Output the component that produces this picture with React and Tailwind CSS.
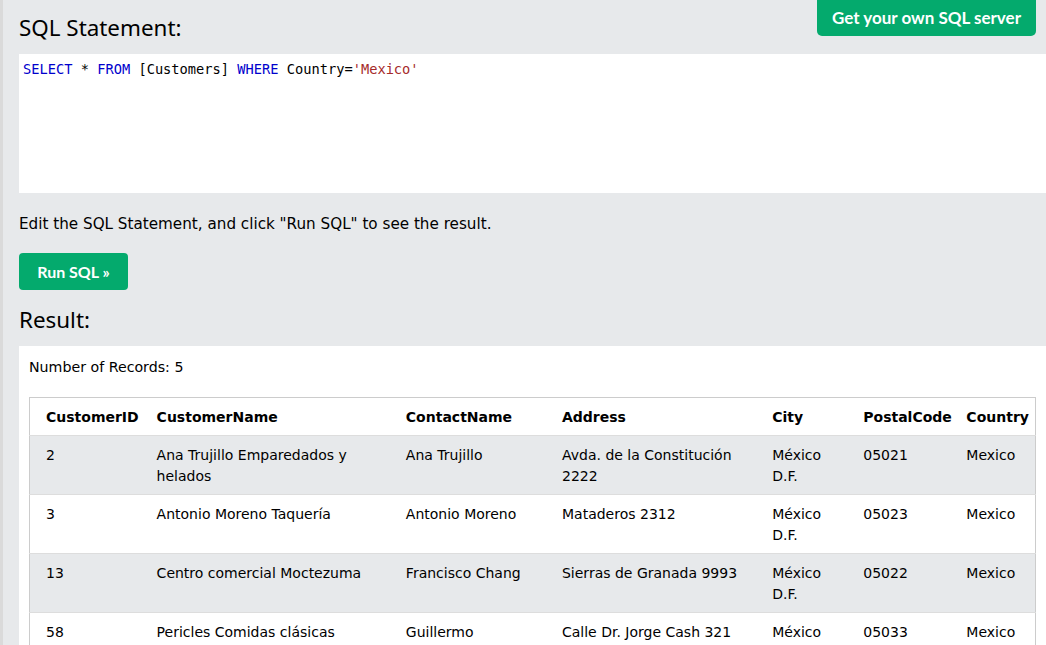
import React from "react";

const rows = [
  ["2", "Ana Trujillo Emparedados y helados", "Ana Trujillo", "Avda. de la Constitución 2222", "México D.F.", "05021", "Mexico"],
  ["3", "Antonio Moreno Taquería", "Antonio Moreno", "Mataderos 2312", "México D.F.", "05023", "Mexico"],
  ["13", "Centro comercial Moctezuma", "Francisco Chang", "Sierras de Granada 9993", "México D.F.", "05022", "Mexico"],
  ["58", "Pericles Comidas clásicas", "Guillermo Fernández", "Calle Dr. Jorge Cash 321", "México D.F.", "05033", "Mexico"],
  ["80", "Tortuga Restaurante", "Miguel Angel Paolino", "Avda. Azteca 123", "México D.F.", "05033", "Mexico"],
];

const headers = ["CustomerID", "CustomerName", "ContactName", "Address", "City", "PostalCode", "Country"];
const widths = ["w-[119px]", "w-[249px]", "w-[156px]", "w-[210px]", "w-[91px]", "w-[103px]", "w-[77px]"];

export default function App() {
  return (
    <div className="min-h-screen bg-[#e7e9eb] border-l-[3px] border-[#dadada] pl-4 text-black" style={{ fontFamily: '"DejaVu Sans", Verdana, sans-serif' }}>
      <div className="flex justify-between items-start">
        <h2 className="mt-3 text-[22.4px] leading-[32px] font-normal" style={{ fontFamily: '"Noto Sans", "Open Sans", sans-serif' }}>
          SQL Statement:
        </h2>
        <button className="h-9 mr-[10px] px-[15px] bg-[#04AA6D] rounded-b-[5px] text-white font-bold text-[17px]" style={{ fontFamily: 'Lato, "Open Sans", sans-serif' }}>
          Get your own SQL server
        </button>
      </div>
      <div className="mt-[10px] h-[139px] bg-white pl-1 pt-[5px] text-[13.7px] leading-5" style={{ fontFamily: '"DejaVu Sans Mono", "Liberation Mono", monospace' }}>
        <span className="text-[#0000cd]">SELECT</span> * <span className="text-[#0000cd]">FROM</span> [Customers]{" "}
        <span className="text-[#0000cd]">WHERE</span> Country=<span className="text-[#a52a2a]">'Mexico'</span>
      </div>
      <p className="mt-[20px] text-[15.2px] leading-[22px]">Edit the SQL Statement, and click "Run SQL" to see the result.</p>
      <button className="mt-[18px] h-[37px] w-[109px] bg-[#04AA6D] rounded-[4px] text-white font-bold text-[16px]" style={{ fontFamily: 'Lato, "Open Sans", sans-serif' }}>
        Run SQL »
      </button>
      <h2 className="mt-[14px] text-[22.4px] leading-[32px] font-normal" style={{ fontFamily: '"Noto Sans", "Open Sans", sans-serif' }}>
        Result:
      </h2>
      <div className="mt-[10px] bg-white pl-[10px] pr-[10px] pt-[11px] pb-4">
        <div className="text-[14.2px] leading-[21px]">Number of Records: 5</div>
        <table className="mt-[19px] w-[1007px] table-fixed border-collapse border border-[#cccccc] text-[14px] leading-[21px]">
          <thead>
            <tr className="border-b border-[#dddddd]">
              {headers.map((h, i) => (
                <th key={h} className={`${widths[i]} text-left font-bold pt-[9px] pb-[7px] ${i === 0 ? "pl-4 pr-2" : i === 6 ? "pl-2 pr-4" : "px-2"}`}>
                  {h}
                </th>
              ))}
            </tr>
          </thead>
          <tbody>
            {rows.map((r, ri) => (
              <tr key={ri} className={`border-b border-[#dddddd] ${ri % 2 === 0 ? "bg-[#e7e9eb]" : "bg-white"}`}>
                {r.map((c, i) => (
                  <td key={i} className={`align-top pt-[9px] pb-[7px] ${i === 0 ? "pl-4 pr-2" : i === 6 ? "pl-2 pr-4" : "px-2"}`}>
                    {c}
                  </td>
                ))}
              </tr>
            ))}
          </tbody>
        </table>
      </div>
    </div>
  );
}
